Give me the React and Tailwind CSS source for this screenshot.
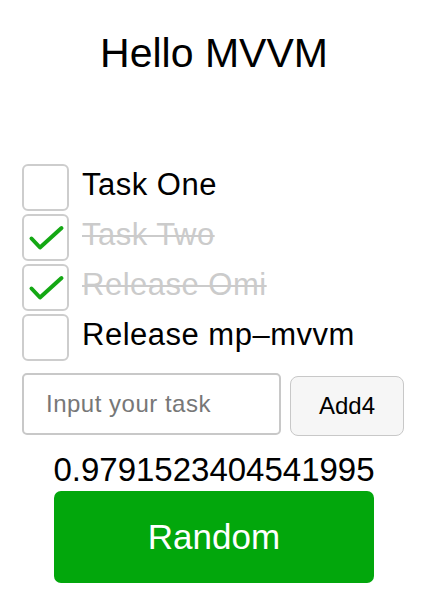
import React, { useState } from 'react';

const font = { fontFamily: '"Liberation Sans", Arial, sans-serif' };

const Check = () => (
  <svg width="47" height="47" viewBox="0 0 47 47" className="absolute -left-[2px] -top-[2px]">
    <path d="M9.5 24.5 L18 33.5 L39.5 14" fill="none" stroke="#14a814" strokeWidth="4" strokeLinecap="round" strokeLinejoin="round" />
  </svg>
);

export default function App() {
  const [tasks] = useState([
    { text: 'Task One', done: false },
    { text: 'Task Two', done: true },
    { text: 'Release Omi', done: true },
    { text: 'Release mp\u2013mvvm', done: false },
  ]);

  return (
    <div className="w-[422px] h-[614px] bg-white text-black" style={font}>
      {/* title */}
      <h1 className="pt-[33px] pl-[6px] text-center text-[41px] leading-none font-normal">Hello MVVM</h1>

      {/* task list */}
      <div className="mt-[90px] pl-[22px] flex flex-col gap-[3px]">
        {tasks.map((t, i) => (
          <div key={i} className="flex items-start h-[47px]">
            <div className="relative w-[47px] h-[47px] shrink-0 rounded-[6px] border-2 border-[#cdcdcd] bg-white">
              {t.done && <Check />}
            </div>
            <span
              className={
                'ml-[13px] mt-[5px] text-[31px] leading-none tracking-[0.5px] whitespace-nowrap ' +
                (t.done ? 'text-[#cbcbcb] line-through decoration-[1.5px]' : 'text-black')
              }
            >
              {t.text}
            </span>
          </div>
        ))}
      </div>

      {/* input row */}
      <div className="mt-[12px] pl-[22px] flex items-start">
        <input
          placeholder="Input your task"
          className="w-[259px] h-[62px] pl-[22px] rounded-[5px] border-2 border-[#c8c8c8] text-[24px] tracking-[0.5px] placeholder:text-[#777] outline-none"
          style={font}
        />
        <button className="ml-[9px] mt-[3px] w-[114px] h-[60px] rounded-[8px] border border-[#c8c8c8] bg-[#f6f6f6] text-[24px] text-black">
          Add4
        </button>
      </div>

      {/* random */}
      <div className="pl-[6px] flex flex-col items-center">
        <div className="mt-[17px] text-[33px] leading-none">0.9791523404541995</div>
        <button className="mt-[5px] w-[320px] h-[92px] rounded-[7px] bg-[#02a70c] text-white text-[35px]">
          Random
        </button>
      </div>
    </div>
  );
}
